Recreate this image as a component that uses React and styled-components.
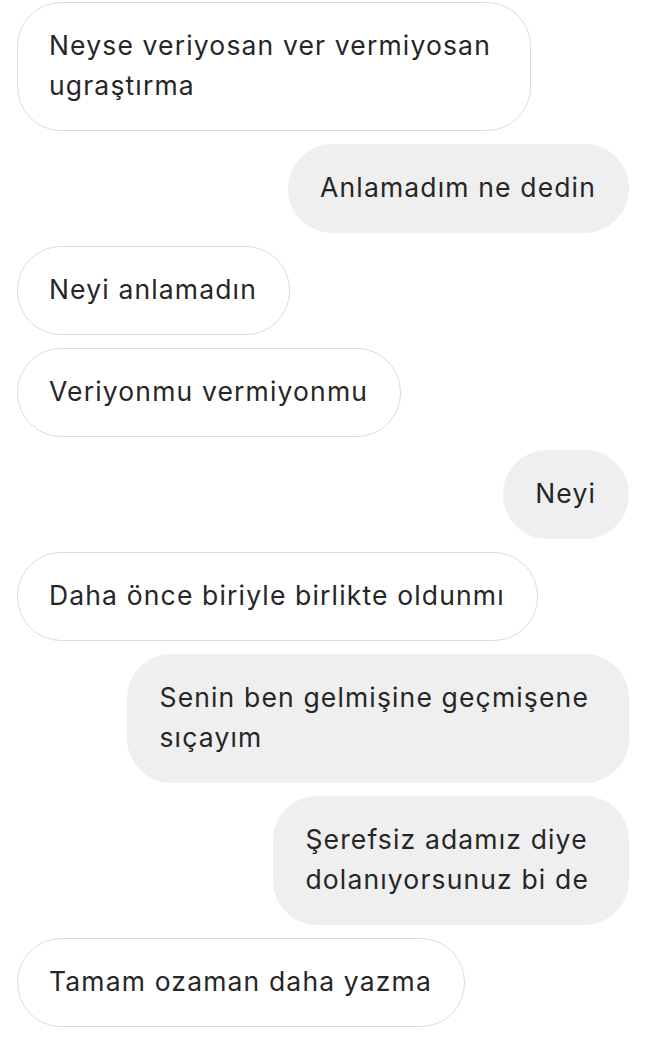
import React from 'react'
import styled, { createGlobalStyle } from 'styled-components'

const GlobalStyle = createGlobalStyle`
  body {
    margin: 0;
    background: #ffffff;
    font-family: Inter, "Noto Sans", sans-serif;
  }
`

const Thread = styled.div`
  display: flex;
  flex-direction: column;
  gap: 13px;
  padding: 2px 16px 12px 17px;
`

const Bubble = styled.div`
  box-sizing: border-box;
  align-self: ${p => (p.$mine ? 'flex-end' : 'flex-start')};
  padding: 22px ${p => (p.$multi ? '39px' : '32px')} 25px 31px;
  border: 1px solid ${p => (p.$mine ? '#efefef' : '#dbdbdb')};
  border-radius: 44px;
  background: ${p => (p.$mine ? '#efefef' : '#ffffff')};
  color: #262626;
  font-size: 26.5px;
  letter-spacing: 1.15px;
  line-height: 40px;
  white-space: nowrap;
`

const messages = [
  { mine: false, lines: ['Neyse veriyosan ver vermiyosan', 'ugraştırma'] },
  { mine: true, lines: ['Anlamadım ne dedin'] },
  { mine: false, lines: ['Neyi anlamadın'] },
  { mine: false, lines: ['Veriyonmu vermiyonmu'] },
  { mine: true, lines: ['Neyi'] },
  { mine: false, lines: ['Daha önce biriyle birlikte oldunmı'] },
  { mine: true, lines: ['Senin ben gelmişine geçmişene', 'sıçayım'] },
  { mine: true, lines: ['Şerefsiz adamız diye', 'dolanıyorsunuz bi de'] },
  { mine: false, lines: ['Tamam ozaman daha yazma'] },
]

export default function App() {
  return (
    <>
      <GlobalStyle />
      <Thread>
        {messages.map((m, i) => (
          <Bubble key={i} $mine={m.mine} $multi={m.lines.length > 1}>
            {m.lines.map((line, j) => (
              <React.Fragment key={j}>
                {j > 0 && <br />}
                {line}
              </React.Fragment>
            ))}
          </Bubble>
        ))}
      </Thread>
    </>
  )
}
